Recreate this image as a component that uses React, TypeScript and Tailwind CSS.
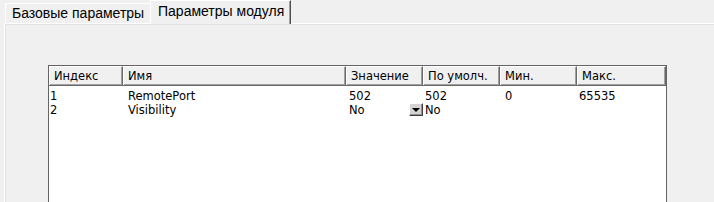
import React from "react";

const columns = [
  { title: "Индекс", w: "w-[74px]" },
  { title: "Имя", w: "w-[223px]" },
  { title: "Значение", w: "w-[77px]" },
  { title: "По умолч.", w: "w-[77px]" },
  { title: "Мин.", w: "w-[77px]" },
  { title: "Макс.", w: "flex-1" },
];

const rows = [
  { idx: "1", name: "RemotePort", value: "502", def: "502", min: "0", max: "65535", combo: false },
  { idx: "2", name: "Visibility", value: "No", def: "No", min: "", max: "", combo: true },
];

function DropButton() {
  return (
    <div className="mt-[1px] ml-auto flex h-[13px] w-[14px] shrink-0 items-center justify-center border border-t-white border-l-white border-r-[#404040] border-b-[#404040] bg-[#d4d4d4] shadow-[inset_-1px_-1px_0_#909090]">
      <svg width="8" height="4" viewBox="0 0 8 4">
        <path d="M0 0h8L4 4z" fill="#000" />
      </svg>
    </div>
  );
}

export default function App() {
  return (
    <div className="relative h-[202px] w-[714px] overflow-hidden bg-[#f0f0f0] font-['Liberation_Sans',sans-serif] text-black">
      {/* tab strip */}
      <div className="flex h-[23px] items-end pl-[5px]">
        <div className="h-[20px] w-[145px] border-t border-l border-white pl-[6px] text-[14px] leading-[18px]">
          Базовые параметры
        </div>
        <div className="relative z-10 -mb-px h-[24px] w-[141px] border-t border-l border-white border-r border-r-[#505050] bg-[#f0f0f0] pl-[7px] text-[14px] leading-[20px] shadow-[inset_-1px_0_0_#a0a0a0]">
          Параметры модуля
        </div>
      </div>

      {/* tab page */}
      <div className="ml-[4px] h-[179px] border-t border-l border-white pt-[41px] pl-[43px] shadow-[inset_1px_1px_0_#e3e3e3]">
        <div className="h-[200px] w-[619px] border border-[#646464] bg-white font-['DejaVu_Sans',sans-serif] text-[11.5px]">
          {/* header */}
          <div className="flex h-[20px] border-b border-[#696969] bg-[#f0f0f0] shadow-[inset_0_-1px_0_#a0a0a0]">
            {columns.map((c) => (
              <div
                key={c.title}
                className={`${c.w} flex items-center border-t border-l border-white pl-[4px] leading-[18px] shadow-[inset_-1px_0_0_#a0a0a0] border-r border-r-[#696969]`}
              >
                {c.title}
              </div>
            ))}
          </div>
          {/* rows */}
          <div className="pt-[2px]">
            {rows.map((r) => (
              <div key={r.idx} className="flex h-[14px] items-center leading-[14px]">
                <div className="w-[74px] pl-[1px] pt-[2px]">{r.idx}</div>
                <div className="w-[223px] pl-[5px] pt-[2px]">{r.name}</div>
                <div className="flex w-[77px] items-center pl-[3px]">
                  <span className="pt-[2px]">{r.value}</span>
                  {r.combo && <DropButton />}
                </div>
                <div className="w-[77px] pl-[2px] pt-[2px]">{r.def}</div>
                <div className="w-[77px] pl-[5px] pt-[2px]">{r.min}</div>
                <div className="flex-1 pl-[2px] pt-[2px]">{r.max}</div>
              </div>
            ))}
          </div>
        </div>
      </div>
    </div>
  );
}
